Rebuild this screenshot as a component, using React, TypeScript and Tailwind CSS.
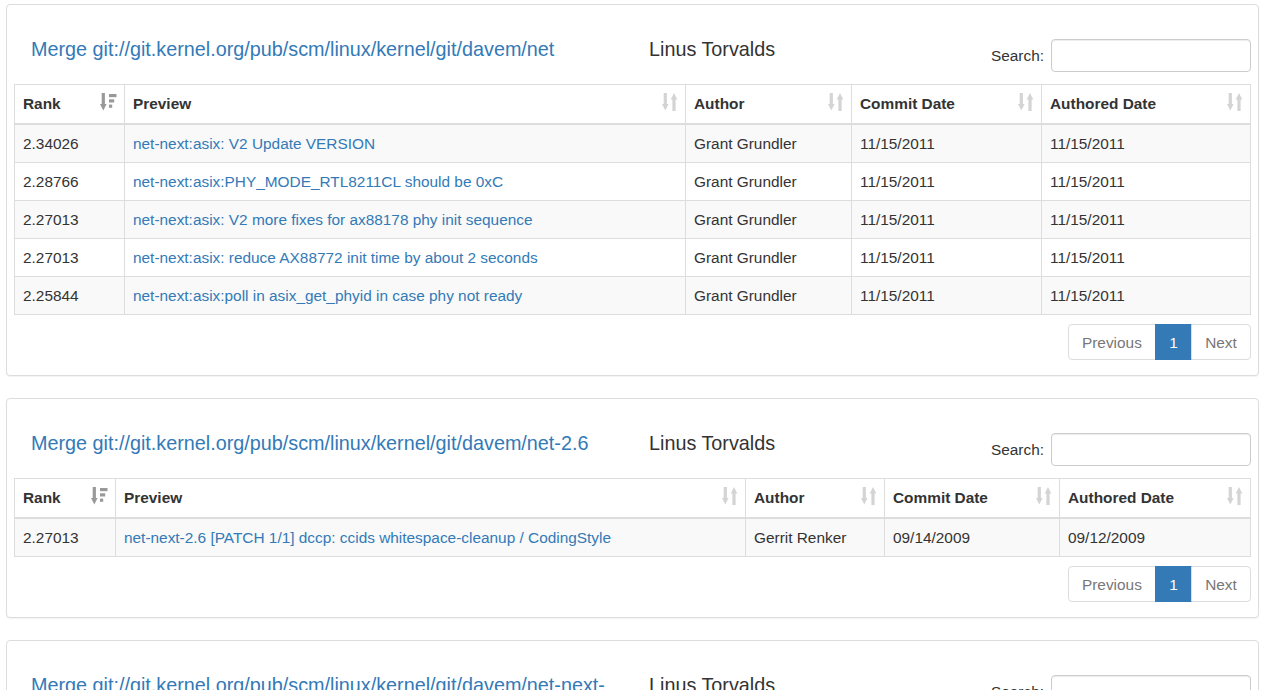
import React from 'react';

type Row = { rank: string; preview: string; author: string; commit: string; authored: string };

type Block = {
  title: string;
  widths: string[];
  rows: Row[];
};

const blocks: Block[] = [
  {
    title: 'Merge git://git.kernel.org/pub/scm/linux/kernel/git/davem/net',
    widths: ['w-[110px]', 'w-[561px]', 'w-[166px]', 'w-[190px]', ''],
    rows: [
      { rank: '2.34026', preview: 'net-next:asix: V2 Update VERSION', author: 'Grant Grundler', commit: '11/15/2011', authored: '11/15/2011' },
      { rank: '2.28766', preview: 'net-next:asix:PHY_MODE_RTL8211CL should be 0xC', author: 'Grant Grundler', commit: '11/15/2011', authored: '11/15/2011' },
      { rank: '2.27013', preview: 'net-next:asix: V2 more fixes for ax88178 phy init sequence', author: 'Grant Grundler', commit: '11/15/2011', authored: '11/15/2011' },
      { rank: '2.27013', preview: 'net-next:asix: reduce AX88772 init time by about 2 seconds', author: 'Grant Grundler', commit: '11/15/2011', authored: '11/15/2011' },
      { rank: '2.25844', preview: 'net-next:asix:poll in asix_get_phyid in case phy not ready', author: 'Grant Grundler', commit: '11/15/2011', authored: '11/15/2011' },
    ],
  },
  {
    title: 'Merge git://git.kernel.org/pub/scm/linux/kernel/git/davem/net-2.6',
    widths: ['w-[101px]', 'w-[630px]', 'w-[139px]', 'w-[175px]', ''],
    rows: [
      { rank: '2.27013', preview: 'net-next-2.6 [PATCH 1/1] dccp: ccids whitespace-cleanup / CodingStyle', author: 'Gerrit Renker', commit: '09/14/2009', authored: '09/12/2009' },
    ],
  },
  {
    title: 'Merge git://git.kernel.org/pub/scm/linux/kernel/git/davem/net-next-2.6',
    widths: ['w-[101px]', 'w-[630px]', 'w-[139px]', 'w-[175px]', ''],
    rows: [
      { rank: '2.25844', preview: 'net-next-2.6 [PATCH] ipv6: fix route lookup in addrconf', author: 'David S. Miller', commit: '03/02/2010', authored: '03/01/2010' },
    ],
  },
];

function SortIcon({ active }: { active?: boolean }) {
  if (active) {
    return (
      <svg width="17" height="18" viewBox="0 0 17 18" className="fill-[#999]">
        <rect x="1.7" y="0" width="3.2" height="12" />
        <polygon points="0,11 6.6,11 3.3,17.5" />
        <rect x="9" y="1" width="7.5" height="3.2" />
        <rect x="9" y="6.3" width="5.2" height="3.2" />
        <rect x="9" y="11.6" width="3.2" height="3.2" />
      </svg>
    );
  }
  return (
    <svg width="16" height="18" viewBox="0 0 16 18" className="fill-[#d4d4d4]">
      <rect x="1.7" y="0" width="3.2" height="12" />
      <polygon points="0,11 6.6,11 3.3,17.5" />
      <polygon points="8.7,6.5 15.3,6.5 12,0" />
      <rect x="10.4" y="6" width="3.2" height="12" />
    </svg>
  );
}

const headers = ['Rank', 'Preview', 'Author', 'Commit Date', 'Authored Date'];

function Panel({ block }: { block: Block }) {
  return (
    <div className="mb-[22px] rounded border border-[#ddd] bg-white px-[7px] pb-[15px] shadow-[0_1px_1px_rgba(0,0,0,0.05)]">
      <div className="flex items-start pb-[12px]">
        <div className="w-[635px] shrink-0 pl-[17px] pt-[33px]">
          <a href="#" className="block w-[595px] text-[19.8px] leading-[22px] text-[#337ab7]">
            {block.title}
          </a>
        </div>
        <div className="pt-[33px] text-[19.8px] leading-[22px] text-[#333]">Linus Torvalds</div>
        <div className="ml-auto mt-[34px] flex items-center gap-[7px]">
          <span className="text-[15.4px] text-[#333]">Search:</span>
          <input
            type="text"
            className="h-[33px] w-[200px] rounded border border-[#ccc] px-3 shadow-[inset_0_1px_1px_rgba(0,0,0,0.075)] outline-none"
          />
        </div>
      </div>

      <table className="w-full table-fixed border-collapse text-[15.4px] leading-[21px] text-[#333]">
        <thead>
          <tr>
            {headers.map((h, i) => (
              <th
                key={h}
                className={`relative border border-b-2 border-[#ddd] px-2 pb-[9px] pr-[30px] pt-2 text-left font-bold ${block.widths[i]}`}
              >
                {h}
                <span className="absolute right-[7px] top-[8px]">
                  <SortIcon active={i === 0} />
                </span>
              </th>
            ))}
          </tr>
        </thead>
        <tbody>
          {block.rows.map((r, i) => (
            <tr key={i} className={i % 2 === 0 ? 'bg-[#f9f9f9]' : 'bg-white'}>
              <td className="border border-[#ddd] px-2 py-2">{r.rank}</td>
              <td className="truncate border border-[#ddd] px-2 py-2">
                <a href="#" className="text-[#337ab7]">{r.preview}</a>
              </td>
              <td className="border border-[#ddd] px-2 py-2">{r.author}</td>
              <td className="border border-[#ddd] px-2 py-2">{r.commit}</td>
              <td className="border border-[#ddd] px-2 py-2">{r.authored}</td>
            </tr>
          ))}
        </tbody>
      </table>

      <div className="mt-[9px] flex justify-end">
        <ul className="flex h-[36px] text-[15.4px] leading-[21px]">
          <li className="flex items-center rounded-l border border-[#ddd] px-[13.2px] text-[#777]">Previous</li>
          <li className="-ml-px flex items-center border border-[#337ab7] bg-[#337ab7] px-[13.2px] text-white">1</li>
          <li className="-ml-px flex items-center rounded-r border border-[#ddd] px-[13.2px] text-[#777]">Next</li>
        </ul>
      </div>
    </div>
  );
}

export default function App() {
  return (
    <div className="min-h-screen bg-white px-[6px] pt-[4px] font-['Liberation_Sans',Arial,sans-serif]">
      {blocks.map((b, i) => (
        <Panel key={i} block={b} />
      ))}
    </div>
  );
}
